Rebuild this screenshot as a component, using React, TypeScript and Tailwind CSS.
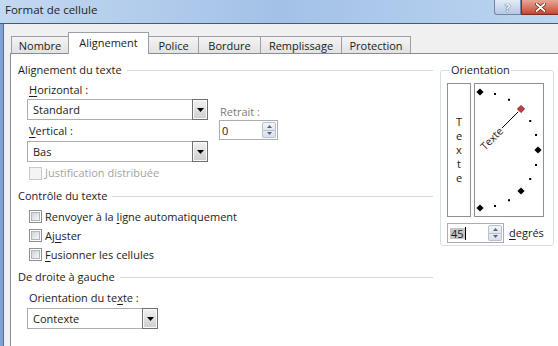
import React from "react";

function U({ children }: { children: React.ReactNode }) {
  return <span className="underline decoration-1 underline-offset-[2px]">{children}</span>;
}

function Triangle() {
  return (
    <svg width="7" height="4" viewBox="0 0 7 4">
      <path d="M0 0H7L3.5 4Z" fill="#000" />
    </svg>
  );
}

function Select({ value, w, className = "" }: { value: string; w: string; className?: string }) {
  return (
    <div className={`flex h-[21px] ${w} ${className}`}>
      <div className="flex-1 flex items-center border border-r-0 border-[#abadb3] bg-white pl-[5px] leading-none">
        {value}
      </div>
      <div className="w-[16px] h-full border border-[#707070] bg-gradient-to-b from-[#f2f2f2] to-[#cdcdcd] shadow-[inset_0_0_0_1px_#fafafa] flex items-center justify-center">
        <Triangle />
      </div>
    </div>
  );
}

function SpinArrow({ up }: { up?: boolean }) {
  return (
    <svg width="5" height="3" viewBox="0 0 5 3">
      <path d={up ? "M0 3H5L2.5 0Z" : "M0 0H5L2.5 3Z"} fill="#56657d" />
    </svg>
  );
}

function Spin({ w, children }: { w: string; children: React.ReactNode }) {
  return (
    <div className={`flex h-[20px] ${w} border border-[#abadb3] bg-white`}>
      <div className="flex-1 flex items-center pl-[2px] leading-none">{children}</div>
      <div className="w-[15px] flex flex-col p-px pl-0">
        <div className="flex-1 border border-[#b7c0cc] rounded-t-[2px] bg-gradient-to-b from-[#f4f7fb] to-[#e1e7ef] flex items-center justify-center">
          <SpinArrow up />
        </div>
        <div className="flex-1 border border-t-0 border-[#b7c0cc] rounded-b-[2px] bg-gradient-to-b from-[#e7ecf3] to-[#d8e0ea] flex items-center justify-center">
          <SpinArrow />
        </div>
      </div>
    </div>
  );
}

function Check({ disabled }: { disabled?: boolean }) {
  return (
    <div
      className={`w-[13px] h-[13px] shrink-0 border p-px ${
        disabled ? "border-[#c9c9c9] bg-[#f4f4f4]" : "border-[#8e8f8f] bg-white"
      }`}
    >
      {!disabled && (
        <div className="w-full h-full border border-[#b2b6bb] bg-gradient-to-br from-[#d0d3d7] to-[#f7f7f7]" />
      )}
    </div>
  );
}

function CheckRow({
  children,
  disabled,
  className = "",
}: {
  children: React.ReactNode;
  disabled?: boolean;
  className?: string;
}) {
  return (
    <div className={`flex items-center ml-[11px] ${className}`}>
      <Check disabled={disabled} />
      <span className={`ml-[3px] leading-[16px] ${disabled ? "text-[#a3a3a3]" : ""}`}>{children}</span>
    </div>
  );
}

function GroupHeader({ label, className = "" }: { label: string; className?: string }) {
  return (
    <div className={`flex items-center h-[16px] ${className}`}>
      <span className="leading-[16px] whitespace-nowrap">{label}</span>
      <div className="flex-1 ml-[5px] h-px bg-[#d9d9d9]" />
    </div>
  );
}

function Dial() {
  const cx = 5;
  const cy = 66;
  const r = 58;
  const pts = [];
  for (let a = 90; a >= -90; a -= 15) {
    const rad = (a * Math.PI) / 180;
    pts.push({ a, x: cx + r * Math.cos(rad), y: cy - r * Math.sin(rad) });
  }
  const big = (x: number, y: number, s: number) => `M${x} ${y - s}L${x + s} ${y}L${x} ${y + s}L${x - s} ${y}Z`;
  const l1 = 31;
  const l2 = 54;
  const c45 = Math.SQRT1_2;
  return (
    <svg width="68" height="132" viewBox="0 0 68 132" className="block">
      {pts.map((p) => {
        if (p.a === 45) {
          return <path key={p.a} d={big(p.x, p.y, 3.6)} fill="#c43c3c" stroke="#7c1414" strokeWidth="0.8" />;
        }
        if (p.a % 45 === 0) {
          return <path key={p.a} d={big(p.x, p.y, 3.6)} fill="#000" />;
        }
        return <rect key={p.a} x={p.x - 1} y={p.y - 1} width="2" height="2" fill="#000" />;
      })}
      <line
        x1={cx + l1 * c45}
        y1={cy - l1 * c45}
        x2={cx + l2 * c45}
        y2={cy - l2 * c45}
        stroke="#000"
        strokeWidth="1"
      />
      <text
        x={cx + 3}
        y={cy}
        transform={`rotate(-45 ${cx} ${cy})`}
        fontSize="10.5"
        fontFamily="'Open Sans', sans-serif"
        dominantBaseline="central"
        fill="#1b1b1b"
      >
        Texte
      </text>
    </svg>
  );
}

export default function App() {
  return (
    <div className="w-[558px] h-[346px] overflow-hidden bg-[#f0f0f0] flex flex-col font-['Open_Sans',sans-serif] text-[11px] text-[#1b1b1b]">
      {/* Title bar */}
      <div className="h-[23px] shrink-0 flex items-start bg-gradient-to-r from-[#c3d8f1] via-[#a3c1e7] to-[#bcd5f1]">
        <span className="pl-[5px] pt-[2px] text-[11.5px] leading-[16px] text-[#1e1e1e]">Format de cellule</span>
        <div className="ml-auto flex">
          <div className="w-[27px] h-[15px] border border-t-0 border-[#6f86a6] rounded-bl-[3px] bg-gradient-to-b from-[#e3ebf6] to-[#b5c9e4] flex items-center justify-center">
            <span className="text-[11px] font-bold leading-none text-white [text-shadow:0_0_1px_#38506f,0_0_1px_#38506f]">?</span>
          </div>
          <div className="w-[37px] h-[15px] border border-t-0 border-r-0 border-[#7b2c22] bg-gradient-to-b from-[#e6a896] to-[#c6432f] flex items-center justify-center">
            <svg width="11" height="9" viewBox="0 0 11 9">
              <path d="M1.5 1L9.5 8M9.5 1L1.5 8" stroke="#5a1a12" strokeWidth="3.2" strokeLinecap="round" />
              <path d="M1.5 1L9.5 8M9.5 1L1.5 8" stroke="#fff" strokeWidth="1.8" strokeLinecap="round" />
            </svg>
          </div>
        </div>
      </div>
      <div className="h-px shrink-0 bg-[#3f5b80]" />

      <div className="flex flex-1 min-h-0">
        <div className="w-[4px] shrink-0 bg-[#7fa3d4] border-r border-[#4f6d96]" />
        <div className="flex-1 flex flex-col pl-[6px] pt-[8px] min-w-0">
          {/* Tabs */}
          <div className="flex items-end h-[21px] pl-px relative z-10">
            <div className="w-[57px] h-[17px] border-l border-t border-[#9a9ea6] bg-gradient-to-b from-[#f4f4f4] to-[#e2e2e2] flex items-center justify-center leading-none">
              Nombre
            </div>
            <div className="w-[81px] h-[22px] -mb-px border-l border-t border-r border-[#9a9ea6] bg-white flex items-center justify-center leading-none pb-[2px]">
              Alignement
            </div>
            <div className="w-[49px] h-[17px] border-t border-[#9a9ea6] bg-gradient-to-b from-[#f4f4f4] to-[#e2e2e2] flex items-center justify-center leading-none">
              Police
            </div>
            <div className="w-[62px] h-[17px] border-l border-t border-[#9a9ea6] bg-gradient-to-b from-[#f4f4f4] to-[#e2e2e2] flex items-center justify-center leading-none">
              Bordure
            </div>
            <div className="w-[81px] h-[17px] border-l border-t border-[#9a9ea6] bg-gradient-to-b from-[#f4f4f4] to-[#e2e2e2] flex items-center justify-center leading-none">
              Remplissage
            </div>
            <div className="w-[70px] h-[17px] border-l border-t border-r border-[#9a9ea6] bg-gradient-to-b from-[#f4f4f4] to-[#e2e2e2] flex items-center justify-center leading-none">
              Protection
            </div>
          </div>

          {/* Panel */}
          <div className="flex-1 bg-white border-l border-t border-[#898c95] flex pl-[7px] pt-[8px]">
            {/* Left column */}
            <div className="w-[415px] shrink-0 flex flex-col">
              <GroupHeader label="Alignement du texte" />
              <div className="mt-[4px] flex">
                <div className="ml-[9px] w-[181px] flex flex-col">
                  <div className="pl-[2px] h-[16px] leading-[16px]">
                    <U>H</U>orizontal :
                  </div>
                  <Select value="Standard" w="w-[181px]" className="mt-[1px]" />
                  <div className="pl-[2px] h-[16px] leading-[16px] mt-[3px]">
                    <U>V</U>ertical :
                  </div>
                  <Select value="Bas" w="w-[181px]" className="mt-[2px]" />
                </div>
                <div className="ml-[11px] flex flex-col pt-[22px]">
                  <div className="h-[16px] leading-[16px] pl-px text-[#7a7a7a]">Retrait :</div>
                  <Spin w="w-[59px]">
                    <span>0</span>
                  </Spin>
                </div>
              </div>
              <CheckRow disabled className="mt-[3px] h-[16px]">
                Justification distribuée
              </CheckRow>

              <GroupHeader label="Contrôle du texte" className="mt-[7px]" />
              <div className="mt-[3px] flex flex-col">
                <CheckRow className="h-[19px]">
                  Renvoyer à la <U>l</U>igne automatiquement
                </CheckRow>
                <CheckRow className="h-[19px]">
                  Aj<U>u</U>ster
                </CheckRow>
                <CheckRow className="h-[19px]">
                  <U>F</U>usionner les cellules
                </CheckRow>
              </div>

              <GroupHeader label="De droite à gauche" className="mt-[5px]" />
              <div className="mt-[5px] ml-[11px] h-[16px] leading-[16px]">
                Orientation du te<U>x</U>te :
              </div>
              <Select value="Contexte" w="w-[131px]" className="mt-[2px] ml-[9px]" />
            </div>

            {/* Orientation */}
            <fieldset className="ml-[7px] w-[114px] h-[184px] border border-[#d5dfe5] rounded-[3px] pl-[6px] pb-[1px] min-w-0">
              <legend className="ml-[3px] px-px leading-[16px]">Orientation</legend>
              <div className="flex mt-[5px]">
                <div className="w-[24px] h-[134px] border border-[#8e9096] flex flex-col items-center justify-center">
                  {["T", "e", "x", "t", "e"].map((c, i) => (
                    <span key={i} className="h-[14px] leading-[14px]">
                      {c}
                    </span>
                  ))}
                </div>
                <div className="ml-[3px] w-[70px] h-[134px] border border-[#8e9096]">
                  <Dial />
                </div>
              </div>
              <div className="flex items-center mt-[6px]">
                <Spin w="w-[57px]">
                  <span className="bg-[#c6c6c6] px-px">45</span>
                  <span className="w-px h-[13px] bg-black" />
                </Spin>
                <span className="ml-[5px] leading-[16px]">
                  <U>d</U>egrés
                </span>
              </div>
            </fieldset>
          </div>
        </div>
      </div>
    </div>
  );
}
